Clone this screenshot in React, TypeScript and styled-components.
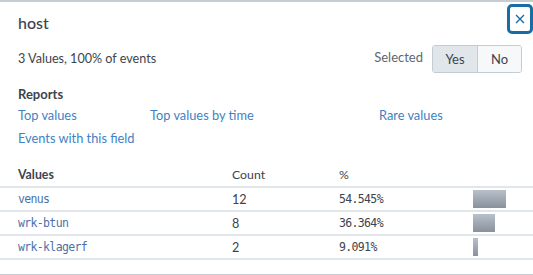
import React from "react";
import styled, { createGlobalStyle } from "styled-components";

const Global = createGlobalStyle`
  html, body { margin: 0; padding: 0; background: #fff; }
  body { font-family: Lato, "Open Sans", sans-serif; color: #3c444d; }
`;

const Panel = styled.div`
  position: relative;
  width: 533px;
  height: 275px;
  box-sizing: border-box;
  border-top: 2px solid #c6cdd5;
  border-bottom: 1px solid #c6cdd5;
  overflow: hidden;
  background: #fff;
`;

const Title = styled.h2`
  margin: 0;
  padding: 11px 18px 0;
  font-size: 16px;
  font-weight: 500;
  line-height: 20px;
  color: #3c444d;
`;

const CloseButton = styled.button`
  position: absolute;
  top: 2px;
  right: 0;
  width: 26px;
  height: 30px;
  box-sizing: border-box;
  border: 3px solid #1a6ca5;
  border-radius: 5px;
  background: #fff;
  padding: 0;
  display: flex;
  align-items: center;
  justify-content: center;
  color: #1a6ca5;
`;

const SummaryRow = styled.div`
  display: flex;
  align-items: center;
  justify-content: space-between;
  padding: 12px 11px 0 18px;
  height: 28px;
`;

const Summary = styled.div`
  font-size: 12.6px;
  line-height: 16px;
`;

const SelectedWrap = styled.div`
  display: flex;
  align-items: center;
  gap: 9px;
`;

const SelectedLabel = styled.span`
  font-size: 13px;
  color: #5c6773;
  margin-top: -4px;
`;

const Toggle = styled.div`
  display: flex;
  border: 1px solid #c3cbd4;
  border-radius: 3px;
  overflow: hidden;
  height: 28px;
  box-sizing: border-box;
`;

const ToggleBtn = styled.div<{ $active?: boolean }>`
  width: ${(p) => (p.$active ? 44 : 43)}px;
  display: flex;
  align-items: center;
  justify-content: center;
  font-size: 13px;
  background: ${(p) => (p.$active ? "#e1e6eb" : "#f7f8fa")};
  color: #3c444d;
  & + & { border-left: 1px solid #c3cbd4; }
`;

const Section = styled.div`
  padding: 13px 18px 0;
`;

const SectionTitle = styled.div`
  font-size: 13px;
  font-weight: 700;
  line-height: 16px;
  color: #3c444d;
`;

const LinkGrid = styled.div`
  display: grid;
  grid-template-columns: 132px 229px auto;
  row-gap: 7px;
  margin-top: 5px;
`;

const Link = styled.a`
  font-size: 12.8px;
  line-height: 16px;
  color: #3f82c4;
  text-decoration: none;
`;

const Table = styled.table`
  width: 533px;
  table-layout: fixed;
  border-collapse: collapse;
  margin-top: 16px;
`;

const Col = styled.col<{ $w?: number }>`
  ${(p) => (p.$w ? `width: ${p.$w}px;` : "")}
`;

const Th = styled.th<{ $bold?: boolean }>`
  text-align: left;
  font-size: 12.3px;
  font-weight: ${(p) => (p.$bold ? 700 : 400)};
  color: #3c444d;
  height: 24px;
  padding: 0;
  vertical-align: middle;
  &:first-child { padding-left: 18px; }
`;

const HeadRow = styled.tr`
  border-bottom: 2px solid #e1e6eb;
`;

const Row = styled.tr`
  border-bottom: 2px solid #e1e6eb;
`;

const Td = styled.td<{ $mono?: boolean; $link?: boolean }>`
  height: 22px;
  padding: 0;
  font-size: ${(p) => (p.$mono ? "11.5px" : "12.6px")};
  letter-spacing: ${(p) => (p.$mono ? "-0.65px" : "0")};
  font-family: ${(p) => (p.$mono ? '"DejaVu Sans Mono", monospace' : "inherit")};
  color: ${(p) => (p.$link ? "#4a72a8" : "#3c444d")};
  vertical-align: middle;
  &:first-child { padding-left: 18px; }
`;

const Bar = styled.div`
  height: 18px;
  background: linear-gradient(#b8c0ca, #89929c);
`;

const rows = [
  { value: "venus", count: 12, pct: 54.545 },
  { value: "wrk-btun", count: 8, pct: 36.364 },
  { value: "wrk-klagerf", count: 2, pct: 9.091 },
];

export default function App() {
  return (
    <>
      <Global />
      <Panel>
        <Title>host</Title>
        <CloseButton aria-label="Close">
          <svg width="10" height="10" viewBox="0 0 10 10">
            <path d="M1 1 L9 9 M9 1 L1 9" stroke="currentColor" strokeWidth="1.4" fill="none" />
          </svg>
        </CloseButton>
        <SummaryRow>
          <Summary>3 Values, 100% of events</Summary>
          <SelectedWrap>
            <SelectedLabel>Selected</SelectedLabel>
            <Toggle>
              <ToggleBtn $active>Yes</ToggleBtn>
              <ToggleBtn>No</ToggleBtn>
            </Toggle>
          </SelectedWrap>
        </SummaryRow>
        <Section>
          <SectionTitle>Reports</SectionTitle>
          <LinkGrid>
            <Link>Top values</Link>
            <Link>Top values by time</Link>
            <Link>Rare values</Link>
            <Link>Events with this field</Link>
          </LinkGrid>
        </Section>
        <Table>
          <colgroup>
            <Col $w={232} />
            <Col $w={107} />
            <Col $w={134} />
            <Col />
          </colgroup>
          <thead>
            <HeadRow>
              <Th $bold>Values</Th>
              <Th>Count</Th>
              <Th>%</Th>
              <Th></Th>
            </HeadRow>
          </thead>
          <tbody>
            {rows.map((r) => (
              <Row key={r.value}>
                <Td $mono $link>{r.value}</Td>
                <Td>{r.count}</Td>
                <Td $mono>{r.pct.toFixed(3)}%</Td>
                <Td>
                  <Bar style={{ width: `${Math.round(r.pct * 0.6)}px` }} />
                </Td>
              </Row>
            ))}
          </tbody>
        </Table>
      </Panel>
    </>
  );
}
